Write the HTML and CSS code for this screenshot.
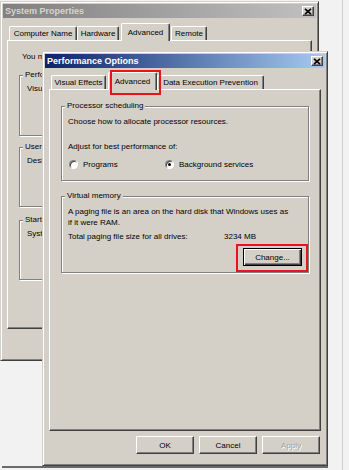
FILE: index.html
```html
<!DOCTYPE html>
<html>
<head>
<meta charset="utf-8">
<title>System Properties - Performance Options</title>
<link rel="stylesheet" href="styles.css">
</head>
<body>
<div class="desk">
  <div class="win sp">
    <div class="titlebar inactive">
      <span class="ttl">System Properties</span>
      <span class="xbtn"><svg width="8" height="7" viewBox="0 0 8 7"><path d="M1 0.8 L7 6.2 M7 0.8 L1 6.2" stroke="#000" stroke-width="1.6" fill="none"/></svg></span>
    </div>
    <div class="tabs">
      <div class="tab w-cn">Computer Name</div>
      <div class="tab w-hw">Hardware</div>
      <div class="tab sel w-adv sp-adv">Advanced</div>
      <div class="tab w-rm">Remote</div>
    </div>
    <div class="panel sp-panel">
      <p class="note">You m</p>
      <fieldset class="grp g-perf">
        <legend>Perfo</legend>
        <p>Visu</p>
      </fieldset>
      <fieldset class="grp g-user">
        <legend>User</legend>
        <p>Desk</p>
      </fieldset>
      <fieldset class="grp g-start">
        <legend>Start</legend>
        <p>Syst</p>
      </fieldset>
    </div>
  </div>

  <div class="win po">
    <div class="titlebar active">
      <span class="ttl">Performance Options</span>
      <span class="xbtn"><svg width="8" height="7" viewBox="0 0 8 7"><path d="M1 0.8 L7 6.2 M7 0.8 L1 6.2" stroke="#000" stroke-width="1.6" fill="none"/></svg></span>
    </div>
    <div class="tabs po-tabs">
      <div class="tab w-ve">Visual Effects</div>
      <div class="tab sel w-adv po-adv">Advanced<span class="ann ann-tab"></span></div>
      <div class="tab w-dep">Data Execution Prevention</div>
    </div>
    <div class="panel po-panel">
      <fieldset class="grp g-proc">
        <legend>Processor scheduling</legend>
        <p>Choose how to allocate processor resources.</p>
        <p class="adjust">Adjust for best performance of:</p>
        <div class="radios">
          <label class="opt opt-prog"><span class="radio"></span>Programs</label>
          <label class="opt"><span class="radio on"></span>Background services</label>
        </div>
      </fieldset>
      <fieldset class="grp g-vm">
        <legend>Virtual memory</legend>
        <p>A paging file is an area on the hard disk that Windows uses as<br>if it were RAM.</p>
        <div class="total"><span class="total-lbl">Total paging file size for all drives:</span><span>3234 MB</span></div>
        <div class="change-row">
          <div class="change-wrap"><button class="btn default">Change...</button><span class="ann ann-btn"></span></div>
        </div>
      </fieldset>
    </div>
    <div class="btnrow po-btns">
      <button class="btn">OK</button>
      <button class="btn">Cancel</button>
      <button class="btn disabled">Apply</button>
    </div>
  </div>
</div>
</body>
</html>
```

FILE: styles.css
```css
* { box-sizing: border-box; }

body {
  margin: 0;
  background: #f2f2f2;
  font-family: "Liberation Sans", Arial, sans-serif;
  font-size: 8px;
  color: #000;
}

.desk {
  position: relative;
  width: 349px;
  height: 470px;
  overflow: hidden;
}
/* drop shadow under the captured picture */
.desk::after {
  content: "";
  position: absolute;
  left: 2px;
  top: 466px;
  width: 326px;
  height: 2px;
  background: #6a6a6a;
}
/* thin frame line at the right of the picture */
.desk::before {
  content: "";
  position: absolute;
  left: 342px;
  top: 0;
  width: 1px;
  height: 470px;
  background: #cfcfcf;
}

p { margin: 0; line-height: 11px; white-space: nowrap; }

/* ---------- windows ---------- */
.win {
  position: absolute;
  display: flex;
  flex-direction: column;
  background: #d4d0c8;
  border: 1px solid;
  border-color: #d4d0c8 #404040 #404040 #d4d0c8;
  box-shadow: inset 1px 1px #fff, inset -1px -1px #808080;
  padding: 2px;
  overflow: hidden;
}
.sp { left: 0; top: 1px; width: 319px; height: 360px; }
.po { left: 42px; top: 51px; width: 286px; height: 415px; z-index: 1; }

.titlebar {
  flex: none;
  height: 14px;
  display: flex;
  align-items: center;
  justify-content: space-between;
  padding: 0 2px 0 2px;
}
.inactive { background: linear-gradient(90deg, #808080, #c0c0c0); color: #d8d4cc; }
.active { background: linear-gradient(90deg, #0a246a, #a6caf0); color: #fff; }
.ttl { font-weight: bold; font-size: 9px; line-height: 14px; }

.xbtn {
  width: 12px;
  height: 10px;
  display: flex;
  align-items: center;
  justify-content: center;
  background: #d4d0c8;
  border: 1px solid;
  border-color: #fff #404040 #404040 #fff;
  box-shadow: inset -1px -1px #808080;
}

/* ---------- tabs ---------- */
.tabs {
  flex: none;
  display: flex;
  align-items: flex-end;
  height: 17px;
  margin-top: 5px;
  padding-left: 6px;
}
.po-tabs { margin-top: 4px; }

.tab {
  height: 14px;
  display: flex;
  align-items: center;
  justify-content: center;
  white-space: nowrap;
  background: #d4d0c8;
  border: 1px solid;
  border-bottom: none;
  border-color: #fff #404040 #404040 #fff;
  border-radius: 2px 2px 0 0;
  box-shadow: inset -1px 0 #808080;
}
.tab.sel {
  position: relative;
  z-index: 2;
  height: 18px;
  margin-bottom: -1px;
  padding-bottom: 1px;
}
.w-cn { width: 68px; }
.w-hw { width: 42px; }
.w-adv { width: 49px; }
.sp-adv { margin: 0 1px -1px 2px; }
.w-rm { width: 36px; }
.w-ve { width: 55px; }
.po-adv { margin: 0 0 -1px 2px; }
.w-dep { width: 107px; }

/* ---------- panels ---------- */
.panel {
  flex: none;
  margin: 0 4px;
  border: 1px solid;
  border-color: #fff #404040 #404040 #fff;
  box-shadow: inset -1px -1px #808080;
  padding: 11px;
  overflow: hidden;
}
.sp-panel { height: 289px; }
.po-panel { height: 342px; }

.note { line-height: 10px; margin: 0 0 8px 3px; }

/* ---------- group boxes ---------- */
.grp {
  margin: 0;
  min-width: 0;
  border: 1px solid #808080;
  box-shadow: inset 1px 1px #fff, 1px 1px #fff;
  padding: 3px 6px 0 7px;
}
.grp legend {
  padding: 0 2px;
  margin-left: -4px;
  line-height: 10px;
  background: #d4d0c8;
}

.g-perf { height: 66px; }
.g-user { height: 65px; margin-top: 6px; }
.g-start { height: 65px; margin-top: 8px; }

.g-proc { height: 80px; padding: 5px 6px 0 6px; }
.g-proc legend, .g-vm legend { margin-left: -3px; }
.adjust { margin-top: 14px; }
.radios { display: flex; align-items: center; height: 11px; margin-top: 7px; padding-left: 1px; }
.opt { display: flex; align-items: center; gap: 5px; white-space: nowrap; }
.opt-prog { width: 96px; }

.radio {
  position: relative;
  width: 9px;
  height: 9px;
  border-radius: 50%;
  background: #fff;
  border: 1px solid;
  border-color: #808080 #fff #fff #808080;
  box-shadow: inset 1px 1px #404040;
}
.radio.on::after {
  content: "";
  position: absolute;
  left: 2px;
  top: 2px;
  width: 3px;
  height: 3px;
  border-radius: 50%;
  background: #000;
}

.g-vm { height: 82px; margin-top: 10px; padding: 5px 6px 0 6px; }
.total { display: flex; margin-top: 3px; line-height: 11px; white-space: nowrap; }
.total-lbl { width: 156px; }
.change-row { display: flex; justify-content: flex-end; margin-top: 6px; }
.change-wrap { position: relative; }

/* ---------- buttons ---------- */
.btn {
  display: block;
  width: 58px;
  height: 18px;
  padding: 0;
  margin: 0;
  font: 8px "Liberation Sans", Arial, sans-serif;
  color: #000;
  background: #d4d0c8;
  border: 1px solid;
  border-color: #fff #404040 #404040 #fff;
  box-shadow: inset -1px -1px #808080;
  white-space: nowrap;
}
.btn.default {
  width: 59px;
  border-color: #000;
  box-shadow: inset 1px 1px #fff, inset -1px -1px #404040, inset -2px -2px #808080;
}
.btn.disabled { color: #a0a0a0; text-shadow: 1px 1px #fff; }

.btnrow {
  flex: none;
  display: flex;
  justify-content: flex-end;
  gap: 5px;
  margin: 5px 5px 0 0;
}

/* ---------- red annotations ---------- */
.ann {
  position: absolute;
  z-index: 5;
  border: 2px solid #e8141c;
  pointer-events: none;
}
.ann-tab { left: 1px; top: -3px; right: -5px; bottom: -5px; }
.ann-btn { left: -7px; top: -4px; right: -6px; bottom: -6px; }
```
